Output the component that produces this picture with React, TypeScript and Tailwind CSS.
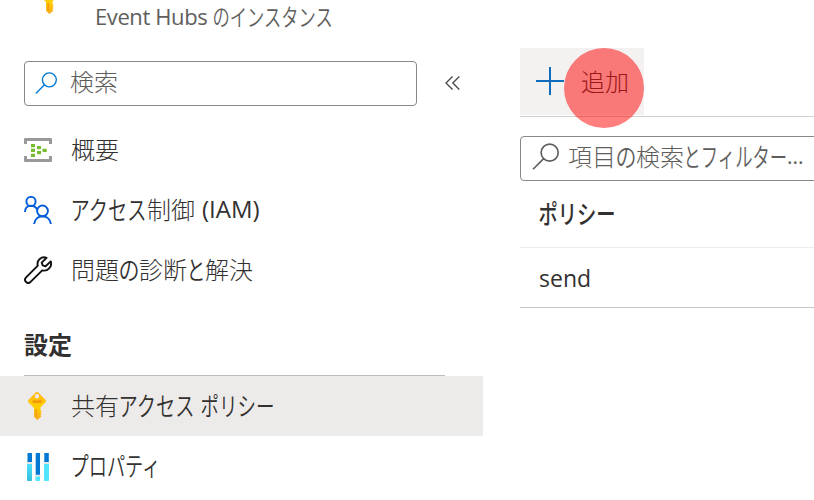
import type { ReactNode } from "react";

function Kana({ children, size, width }: { children: string; size: number; width: number }) {
  const natural = children.length * size;
  const scale = (width + 1) / natural;
  return (
    <span className="inline-block shrink-0 leading-[24px] [&:not(.font-medium_*)]:font-[350]" style={{ width }}>
      <span
        className="inline-block origin-left whitespace-nowrap"
        style={{ transform: `translateX(-0.5px) scale(${scale}, 1.08)` }}
      >
        {children}
      </span>
    </span>
  );
}

function Latin({ children, className = "" }: { children: ReactNode; className?: string }) {
  return <span className={`font-['Open_Sans','Noto_Sans',sans-serif] font-normal whitespace-pre ${className}`}>{children}</span>;
}

function SearchIcon({ className }: { className: string }) {
  return (
    <svg viewBox="0 0 26 26" fill="none" stroke="currentColor" strokeWidth="1.6" className={className}>
      <circle cx="17" cy="9.3" r="8.2" />
      <path d="M11.2 15.1 1 25.3" />
    </svg>
  );
}

function EventHubIcon() {
  return (
    <svg viewBox="0 0 28 24" className="h-6 w-7">
      <path d="M0 6V1.2Q0 0 1.2 0H26.8Q28 0 28 1.2V6H25V3H3V6Z" fill="#999" />
      <path d="M0 18V22.800Q0 24 1.200 24H26.800Q28 24 28 22.800V18H25V21H3V18Z" fill="#999" />
      <path d="M7 6h4v3.200H7zM7 10.700h4v3.200H7zM7 15.700h4v3.200H7zM13 8h4v3.200h-4zM13 13h4v3.200h-4zM18.500 10.700h4.200v3.200h-4.200z" fill="#76bc2d" />
    </svg>
  );
}

function PeopleIcon() {
  return (
    <svg viewBox="0 0 28 28" fill="none" stroke="#015cda" strokeWidth="1.9" className="size-7">
      <circle cx="7" cy="5.500" r="4.600" />
      <path d="M1 16c0-7.500 9-8 12.200-2.500" />
      <circle cx="18.500" cy="14.900" r="5.400" />
      <path d="M10 28.500c1.400-11 15.600-11 17 0" />
    </svg>
  );
}

function WrenchIcon() {
  return (
    <svg viewBox="0 0 28 28" fill="none" stroke="#111" strokeWidth="1.900" strokeLinejoin="round" className="size-7">
      <path d="M22.600 1.800C17.500-.2 12.300 4.200 13.800 9.700L2.100 21.400c-3 3.200 1.400 7.600 4.500 4.500L18.200 14.300c5.400 1.500 10.300-3.600 8.500-8.900L21.600 10.300 18.700 9.400 17.700 6.600Z" />
    </svg>
  );
}

function KeyIcon() {
  return (
    <svg viewBox="0 0 18 28" className="h-7 w-[18px]">
      <defs>
        <linearGradient id="key" x1="0" y1="0" x2="0" y2="1">
          <stop offset="0" stopColor="#ffb310" />
          <stop offset=".55" stopColor="#ffd000" />
          <stop offset="1" stopColor="#f9a91b" />
        </linearGradient>
      </defs>
      <path fillRule="evenodd" d="M7.700.5Q9-.5 10.300.5L17.400 7.700Q18.600 9 17.400 10.300L12.500 15.500V18L13.700 19.200 12.500 20.500 13.700 21.800 12.500 23.200 13.400 24.500 9.300 28 6 24.700V16L.6 10.400Q-.6 9 .6 7.700ZM9 2a2.200 2.200 0 1 0 0 4.400A2.200 2.200 0 1 0 9 2Z" fill="url(#key)" />
      <rect x="4.500" y="8.200" width="9.300" height="2.800" rx="1" fill="#f39a0b" />
      <path d="M7.400 17h1.500v8.600l-1.500-1.200Z" fill="#f59b12" />
    </svg>
  );
}

function PropertiesIcon() {
  return (
    <svg viewBox="0 0 22 28" className="h-7 w-[22px]">
      <defs>
        <linearGradient id="bar" x1="0" y1="0" x2="0" y2="1">
          <stop offset="0" stopColor="#50e6ff" />
          <stop offset="1" stopColor="#32bedd" />
        </linearGradient>
      </defs>
      <rect y="8" width="5" height="20" rx=".7" fill="url(#bar)" />
      <rect x="8.500" y="22" width="4.500" height="6" rx=".7" fill="#50e6ff" />
      <rect x="17" y="8" width="5" height="20" rx=".7" fill="#50e6ff" />
      <path d="M.5 0h4.500v10H.5zM8.700 0h4.300v23H8.700zM17.300 0h4.500v10h-4.500z" fill="#0078d4" />
      <path d="M-.4 9h5.800v2H-.4zM8 21.800h5.800v1.800H8zM16.600 9h5.800v2h-5.800z" fill="#e6e6e6" />
    </svg>
  );
}

function MenuItem({ icon, children, active = false }: { icon: ReactNode; children: ReactNode; active?: boolean }) {
  return (
    <li className={`flex h-[60px] items-center pl-6 ${active ? "bg-[#edebe9]" : ""}`}>
      <span className="mr-[19px] flex w-7 shrink-0 justify-center">{icon}</span>
      <span className="flex items-center pb-[2px] whitespace-pre">{children}</span>
    </li>
  );
}

export default function App() {
  return (
    <div className="flex h-[500px] w-[814px] overflow-hidden bg-white font-['Noto_Sans_CJK_JP',sans-serif] text-[24px] leading-[36px] font-light text-[#323130]">
      <aside className="w-[483px] shrink-0">
        <header className="flex h-[61px] items-start text-[22px] text-[#605e5c]">
          <div className="ml-[40px] h-[14px] w-[18px] shrink-0">
            <div className="-mt-[14px]"><KeyIcon /></div>
          </div>
          <div className="ml-[37px] flex h-8 items-center">
            <Latin className="w-[118px] tracking-[-0.4px]">Event Hubs</Latin>
            <span className="flex pb-[2px]"><Kana size={22} width={120}>のインスタンス</Kana></span>
          </div>
        </header>
        <div className="flex items-center">
          <div className="ml-6 flex h-[45px] w-[393px] items-center rounded-[4px] border border-[#8a8886] pl-[10px] text-[#605e5c]">
            <SearchIcon className="mr-[13px] mb-px size-[22px] text-[#0078d4]" />
            <span className="pb-[5px]">検索</span>
          </div>
          <svg viewBox="0 0 15 14" fill="none" stroke="#484644" strokeWidth="1.300" className="mb-[2px] ml-7 h-[14px] w-[15px]">
            <path d="M7.500.5 1 7l6.500 6.500M14.300.5 7.800 7l6.500 6.500" />
          </svg>
        </div>
        <ul className="mt-[14px]">
          <MenuItem icon={<EventHubIcon />}>概要</MenuItem>
          <MenuItem icon={<PeopleIcon />}>
            <Kana size={24} width={76}>アクセス</Kana>
            <span>制御</span>
            <Latin className="pl-[7px] text-[24px]">(IAM)</Latin>
          </MenuItem>
          <MenuItem icon={<WrenchIcon />}>
            <span>問題</span><Kana size={24} width={20}>の</Kana><span>診断</span><Kana size={24} width={18}>と</Kana><span>解決</span>
          </MenuItem>
        </ul>
        <h2 className="mr-[38px] ml-6 flex h-[76px] items-center border-b border-[#bebbb8] pt-3 font-bold">設定</h2>
        <ul>
          <MenuItem active icon={<span className="-translate-x-px"><KeyIcon /></span>}>
            <span>共有</span><Kana size={24} width={76}>アクセス</Kana><span className="w-[6px]" /><Kana size={24} width={73}>ポリシー</Kana>
          </MenuItem>
          <MenuItem icon={<span className="translate-y-px"><PropertiesIcon /></span>}>
            <Kana size={24} width={90}>プロパティ</Kana>
          </MenuItem>
        </ul>
      </aside>
      <main className="ml-[37px] w-[310px] shrink-0 pt-12">
        <div className="relative h-[69px] border-b border-[#d2d0ce]">
          <button className="flex h-[67px] w-[124px] items-center bg-[#f3f2f1] pl-4 font-light">
            <svg viewBox="0 0 28 28" stroke="#0f6cbd" strokeWidth="2" className="mr-[17px] mb-[2px] size-7">
              <path d="M0 14h28M14 0v28" />
            </svg>
            <span className="pb-[2px]">追加</span>
          </button>
          <span className="absolute top-0 left-[44px] size-[80px] rounded-full bg-[rgba(255,0,0,0.5)]" />
        </div>
        <div className="mt-[19px] flex h-[45px] items-center rounded-[4px] border border-[#8a8886] pl-[11px] text-[#605e5c]">
          <SearchIcon className="mr-[9px] mb-[5px] size-[27px] shrink-0" />
          <span className="flex items-center pb-[5px]">
            <span className="shrink-0">項目</span><Kana size={24} width={20}>の</Kana><span className="shrink-0">検索</span><Kana size={24} width={103}>とフィルター</Kana><Latin className="text-[21px]">...</Latin>
          </span>
        </div>
        <div className="flex h-[67px] items-center border-b border-[#edebe9] pb-[2px] pl-[19px] font-medium">
          <Kana size={24} width={76}>ポリシー</Kana>
        </div>
        <div className="flex h-[60px] items-center border-b border-[#c8c6c4] pl-[19px]">
          <Latin className="text-[23px]">send</Latin>
        </div>
      </main>
    </div>
  );
}
